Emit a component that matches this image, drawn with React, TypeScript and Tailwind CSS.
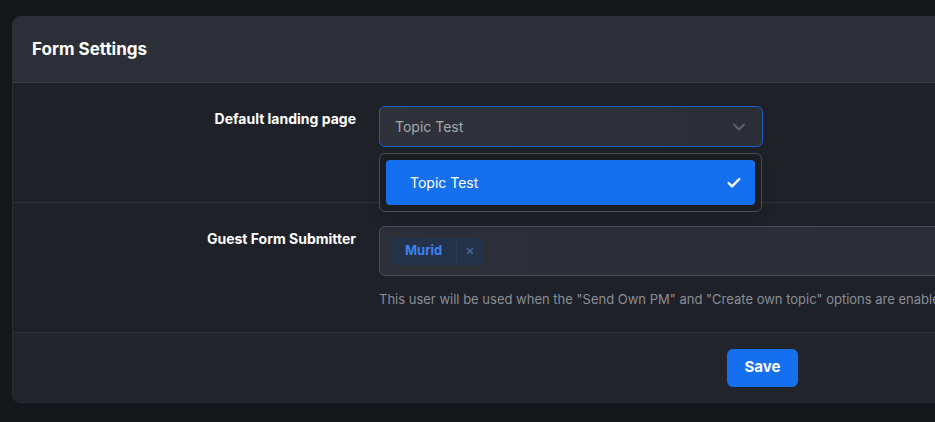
import { Check, ChevronDown, X } from 'lucide-react'

const font = { fontFamily: 'Inter, "Noto Sans", sans-serif' }

export default function App() {
  return (
    <div className="h-screen w-screen overflow-hidden bg-[#16171b] pt-4 pl-[12px]" style={font}>
      {/* Card */}
      <div className="w-[1501px] rounded-lg border border-[#2a2d35] bg-[#1f2128] overflow-visible">
        {/* Header */}
        <div className="h-[66px] flex items-center px-[19px] bg-[#2c2f38] rounded-t-lg border-b border-[#3a3d48]">
          <h2 className="text-[17px] font-bold text-white">Form Settings</h2>
        </div>

        {/* Default landing page */}
        <div className="h-[120px] flex pt-[23px] border-b border-[#2e3139]">
          <div className="w-[343px] text-right">
            <label className="text-sm font-bold text-white">Default landing page</label>
          </div>
          <div className="ml-[23px] w-[384px] relative">
            <div className="h-[41px] flex items-center justify-between pl-[15px] pr-[13px] rounded-md border border-[#1d5fc4] bg-gradient-to-r from-[#2f323b] to-[#2b2e36]">
              <span className="text-sm text-[#a3a7af]">Topic Test</span>
              <ChevronDown className="w-[20px] h-[20px] text-[#5d6069]" strokeWidth={2.5} />
            </div>
            <div className="absolute z-10 left-0 top-[47px] w-[383px] p-[6px] rounded-md border border-[#4a4c52] bg-[#1b1d21] shadow-lg">
              <div className="h-[45px] flex items-center justify-between pl-6 pr-[13px] rounded bg-[#1570ef]">
                <span className="text-sm text-white">Topic Test</span>
                <Check className="w-[16px] h-[16px] text-white" strokeWidth={3.5} />
              </div>
            </div>
          </div>
        </div>

        {/* Guest Form Submitter */}
        <div className="h-[130px] flex pt-[23px] border-b border-[#2e3139]">
          <div className="w-[343px] text-right">
            <label className="text-sm font-bold text-white">Guest Form Submitter</label>
          </div>
          <div className="ml-[23px] flex-1">
            <div className="h-[50px] flex items-center px-[11px] rounded-md border border-[#4a4d57] bg-gradient-to-r from-[#2c2f38] to-[#2a2d35]">
              <div className="h-[27px] flex items-center rounded bg-[#24324a]">
                <span className="pl-[14px] pr-[14px] text-[13px] font-bold text-[#3b82f0]">Murid</span>
                <span className="h-full w-px bg-[#2c3a52]" />
                <span className="px-[8px] flex items-center">
                  <X className="w-[10px] h-[10px] text-[#4b6fa8]" strokeWidth={3} />
                </span>
              </div>
            </div>
            <p className="mt-[14px] text-[13px] text-[#8a8e97] whitespace-nowrap">
              This user will be used when the "Send Own PM" and "Create own topic" options are enabled.
            </p>
          </div>
        </div>

        {/* Footer */}
        <div className="h-[69px] flex items-center justify-center bg-[#22252c] rounded-b-lg">
          <button className="h-[38px] px-[18px] rounded-md bg-[#1570ef] text-white text-[15px] font-bold">
            Save
          </button>
        </div>
      </div>
    </div>
  )
}
